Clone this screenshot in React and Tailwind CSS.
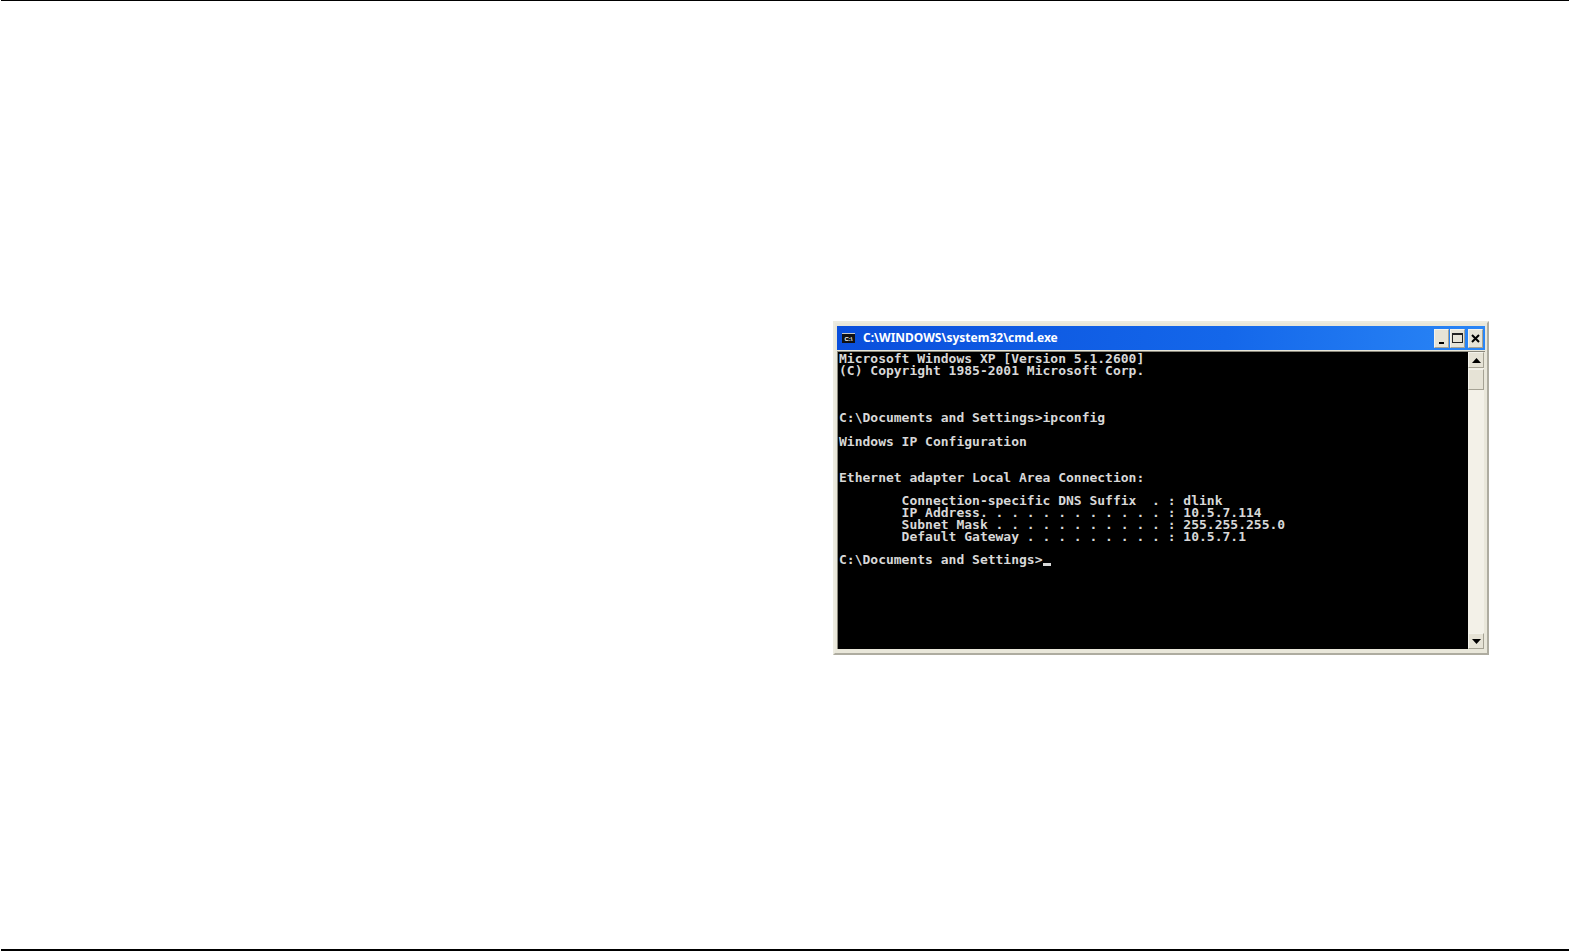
const lines = [
  "Microsoft Windows XP [Version 5.1.2600]",
  "(C) Copyright 1985-2001 Microsoft Corp.",
  "",
  "",
  "",
  "C:\\Documents and Settings>ipconfig",
  "",
  "Windows IP Configuration",
  "",
  "",
  "Ethernet adapter Local Area Connection:",
  "",
  "        Connection-specific DNS Suffix  . : dlink",
  "        IP Address. . . . . . . . . . . . : 10.5.7.114",
  "        Subnet Mask . . . . . . . . . . . : 255.255.255.0",
  "        Default Gateway . . . . . . . . . : 10.5.7.1",
  "",
];

const CaptionButton = ({ children, className = "" }) => (
  <div
    className={`w-[15px] h-[19px] flex items-center justify-center bg-[#e6e3d6] border border-[#f4f3ec] border-r-[#a5a294] border-b-[#a5a294] ${className}`}
  >
    {children}
  </div>
);

const ScrollButton = ({ d }) => (
  <div className="w-[16px] h-[16px] flex items-center justify-center bg-[#e6e3d6] border border-[#f4f3ec] border-r-[#a5a294] border-b-[#a5a294]">
    <svg width="9" height="5" viewBox="0 0 9 5">
      <path d={d} fill="#000" />
    </svg>
  </div>
);

const CmdWindow = () => {
  return (
    <div className="w-[656px] h-[334px] flex flex-col border-2 border-[#ecebe0] border-r-[#aeaca0] border-b-[#aeaca0] bg-[#e9e7da] pt-[3px] px-[2px] pb-[4px]">
      {/* title bar */}
      <div className="h-[24px] shrink-0 flex items-center pl-[5px] pr-[2px] bg-[linear-gradient(to_right,#0a4fdc,#1467ea_60%,#2a86f6)]">
        <div className="w-[13px] h-[10px] bg-[#111] border-t border-[#c8c8c8] flex items-center justify-center text-[6px] leading-none font-bold text-white font-['Liberation_Sans',sans-serif]">
          C:\
        </div>
        <span className="ml-[8px] text-[12px] font-bold text-white font-['Noto_Sans',sans-serif]">
          {"C:\\WINDOWS\\system32\\cmd.exe"}
        </span>
        <div className="ml-auto flex items-center">
          <CaptionButton>
            <div className="w-[5px] h-[2px] bg-black mt-[9px] mr-[1px]"></div>
          </CaptionButton>
          <CaptionButton className="ml-px">
            <div className="w-[11px] h-[10px] border border-t-2 border-[#222]"></div>
          </CaptionButton>
          <CaptionButton className="ml-[3px]">
            <svg width="9" height="9" viewBox="0 0 9 9">
              <path d="M1 1 L8 8 M8 1 L1 8" stroke="#000" strokeWidth="2" />
            </svg>
          </CaptionButton>
        </div>
      </div>
      <div className="flex-1 flex mt-px border-t border-l border-[#8a887c] min-h-0">
        {/* console */}
        <div className="flex-1 bg-black text-[#d8d8d8] pt-[1.3px] pl-px">
          <pre className="font-['DejaVu_Sans_Mono',monospace] text-[13px] leading-[11.83px] font-bold">
            {lines.map((line, i) => (
              <div key={i} className="h-[11.83px]">
                {line}
              </div>
            ))}
            <div className="h-[11.83px]">
              {"C:\\Documents and Settings>"}
              <span className="inline-block w-[8px] h-[3px] bg-[#d8d8d8] align-[-2px]"></span>
            </div>
          </pre>
        </div>
        {/* scrollbar */}
        <div className="w-[16px] mr-px flex flex-col justify-between bg-[#f3f1e8]">
          <div>
            <ScrollButton d="M4.5 0 L9 5 L0 5 Z" />
            <div className="w-[16px] h-[21px] mt-px bg-[#e6e3d6] border border-[#f4f3ec] border-r-[#a5a294] border-b-[#a5a294]"></div>
          </div>
          <ScrollButton d="M0 0 L9 0 L4.5 5 Z" />
        </div>
      </div>
    </div>
  );
};

const App = () => {
  return (
    <div className="h-screen flex flex-col bg-white">
      <div className="h-px ml-px bg-black shrink-0"></div>
      <div className="flex-1 pl-[833px] pt-[320px]">
        <CmdWindow />
      </div>
      <div className="h-[2px] ml-px bg-black shrink-0 mb-px"></div>
    </div>
  );
};

export default App;
